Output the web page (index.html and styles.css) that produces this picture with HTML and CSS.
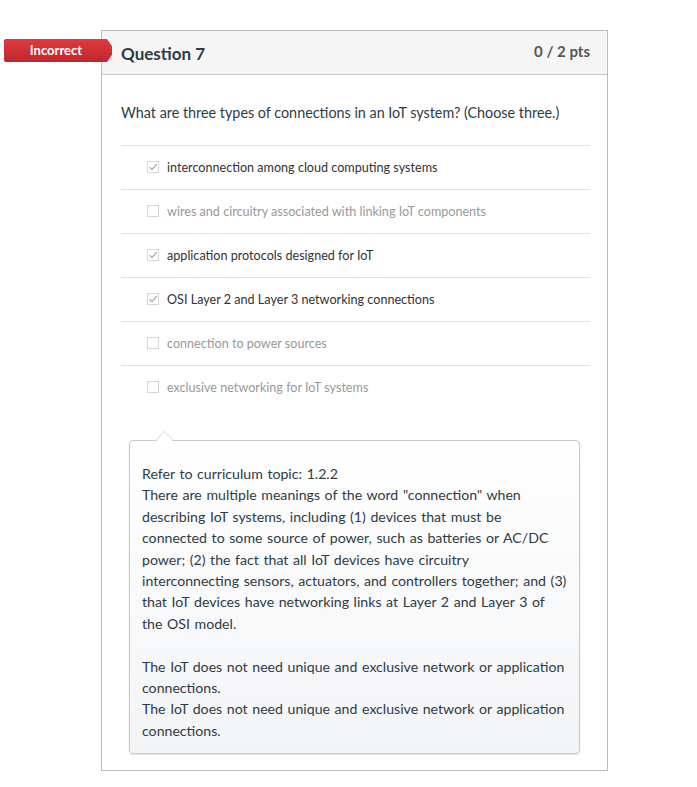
FILE: index.html
```html
<!DOCTYPE html>
<html>
<head>
<meta charset="utf-8">
<link rel="stylesheet" href="styles.css">
</head>
<body>
<div class="card">
  <div class="badge">Incorrect</div>
  <div class="header">
    <span class="title">Question 7</span>
    <span class="pts">0 / 2 pts</span>
  </div>
  <div class="body">
    <p class="qtext">What are three types of connections in an IoT system? (Choose three.)</p>
    <div class="answers">
      <div class="row checked"><span class="box"><svg width="12" height="12" viewBox="0 0 12 12"><path d="M2.5 6.2 L5 8.6 L9.8 3" fill="none" stroke="#a8a8a8" stroke-width="1.2"/></svg></span><span>interconnection among cloud computing systems</span></div>
      <div class="row"><span class="box"></span><span>wires and circuitry associated with linking IoT components</span></div>
      <div class="row checked"><span class="box"><svg width="12" height="12" viewBox="0 0 12 12"><path d="M2.5 6.2 L5 8.6 L9.8 3" fill="none" stroke="#a8a8a8" stroke-width="1.2"/></svg></span><span>application protocols designed for IoT</span></div>
      <div class="row checked"><span class="box"><svg width="12" height="12" viewBox="0 0 12 12"><path d="M2.5 6.2 L5 8.6 L9.8 3" fill="none" stroke="#a8a8a8" stroke-width="1.2"/></svg></span><span>OSI Layer 2 and Layer 3 networking connections</span></div>
      <div class="row"><span class="box"></span><span>connection to power sources</span></div>
      <div class="row last"><span class="box"></span><span>exclusive networking for IoT systems</span></div>
    </div>
    <div class="callout">
      <p>Refer to curriculum topic: 1.2.2<br>There are multiple meanings of the word "connection" when describing IoT systems, including (1) devices that must be connected to some source of power, such as batteries or AC/DC power; (2) the fact that all IoT devices have circuitry interconnecting sensors, actuators, and controllers together; and (3) that IoT devices have networking links at Layer 2 and Layer 3 of the OSI model.</p>
      <p>The IoT does not need unique and exclusive network or application connections.<br>The IoT does not need unique and exclusive network or application connections.</p>
    </div>
  </div>
</div>
</body>
</html>
```
FILE: styles.css
```css
html, body { margin: 0; padding: 0; background: #fff; }
body { font-family: Lato, "Open Sans", sans-serif; color: #2d3b45; }
.card {
  position: relative;
  margin: 30px 0 0 101px;
  width: 505px;
  border: 1px solid #bbb;
  padding-bottom: 16px;
}
.badge {
  position: absolute;
  left: -98px;
  top: 8px;
  width: 104px;
  height: 23px;
  line-height: 23px;
  padding-right: 4px;
  text-align: center;
  color: #fff;
  font-weight: bold;
  font-size: 13px;
  background: linear-gradient(#df3a3f, #c0262c);
  clip-path: polygon(0 0, 103px 0, 111px 50%, 103px 100%, 0 100%);
  border-radius: 2px 0 0 2px;
}
.header {
  height: 43px;
  background: #f5f5f5;
  border-bottom: 1px solid #c7c7c7;
  display: flex;
  align-items: center;
  justify-content: space-between;
  padding: 0 17px 0 19px;
}
.title { font-size: 17px; font-weight: bold; color: #2d3b45; margin-top: 2px; }
.pts { font-size: 15px; font-weight: bold; color: #555; margin-top: -4px; }
.body { padding: 0 17px 0 19px; }
.qtext { margin: 0; padding: 28px 0 22px; font-size: 14.35px; line-height: 20px; color: #2d3b45; }
.answers { margin-bottom: 31px; }
.row {
  height: 43px;
  border-top: 1px solid #e3e3e3;
  display: flex;
  align-items: center;
  padding-left: 26px;
  font-size: 12.6px;
  color: #999;
}
.row.checked { color: #333; }
.box {
  width: 12px;
  height: 12px;
  border: 1px solid #d6d6d6;
  box-sizing: border-box;
  margin-right: 8px;
  position: relative;
  flex: none;
  margin-top: -1px;
}
.box svg { position: absolute; left: -1px; top: -1px; }
.callout {
  position: relative;
  margin: 0 10px 0 8px;
  border: 1px solid #c8c8c8;
  border-radius: 4px;
  background: linear-gradient(#fff, #f3f4f6);
  box-shadow: 0 1px 2px rgba(0,0,0,0.12);
  padding: 22px 10px 12px 12px;
  font-size: 14.13px;
  word-spacing: 1px;
  line-height: 21.4px;
  color: #2d3b45;
}
.callout::before {
  content: "";
  position: absolute;
  top: -9px;
  left: 27px;
  width: 14px;
  height: 14px;
  background: #fff;
  border-left: 1px solid #d6d6d6;
  border-top: 1px solid #d6d6d6;
  transform: rotate(45deg) scale(0.8, 0.8);
}
.callout p { margin: 0 0 21.4px; }
.callout p:last-child { margin-bottom: 0; }
```
